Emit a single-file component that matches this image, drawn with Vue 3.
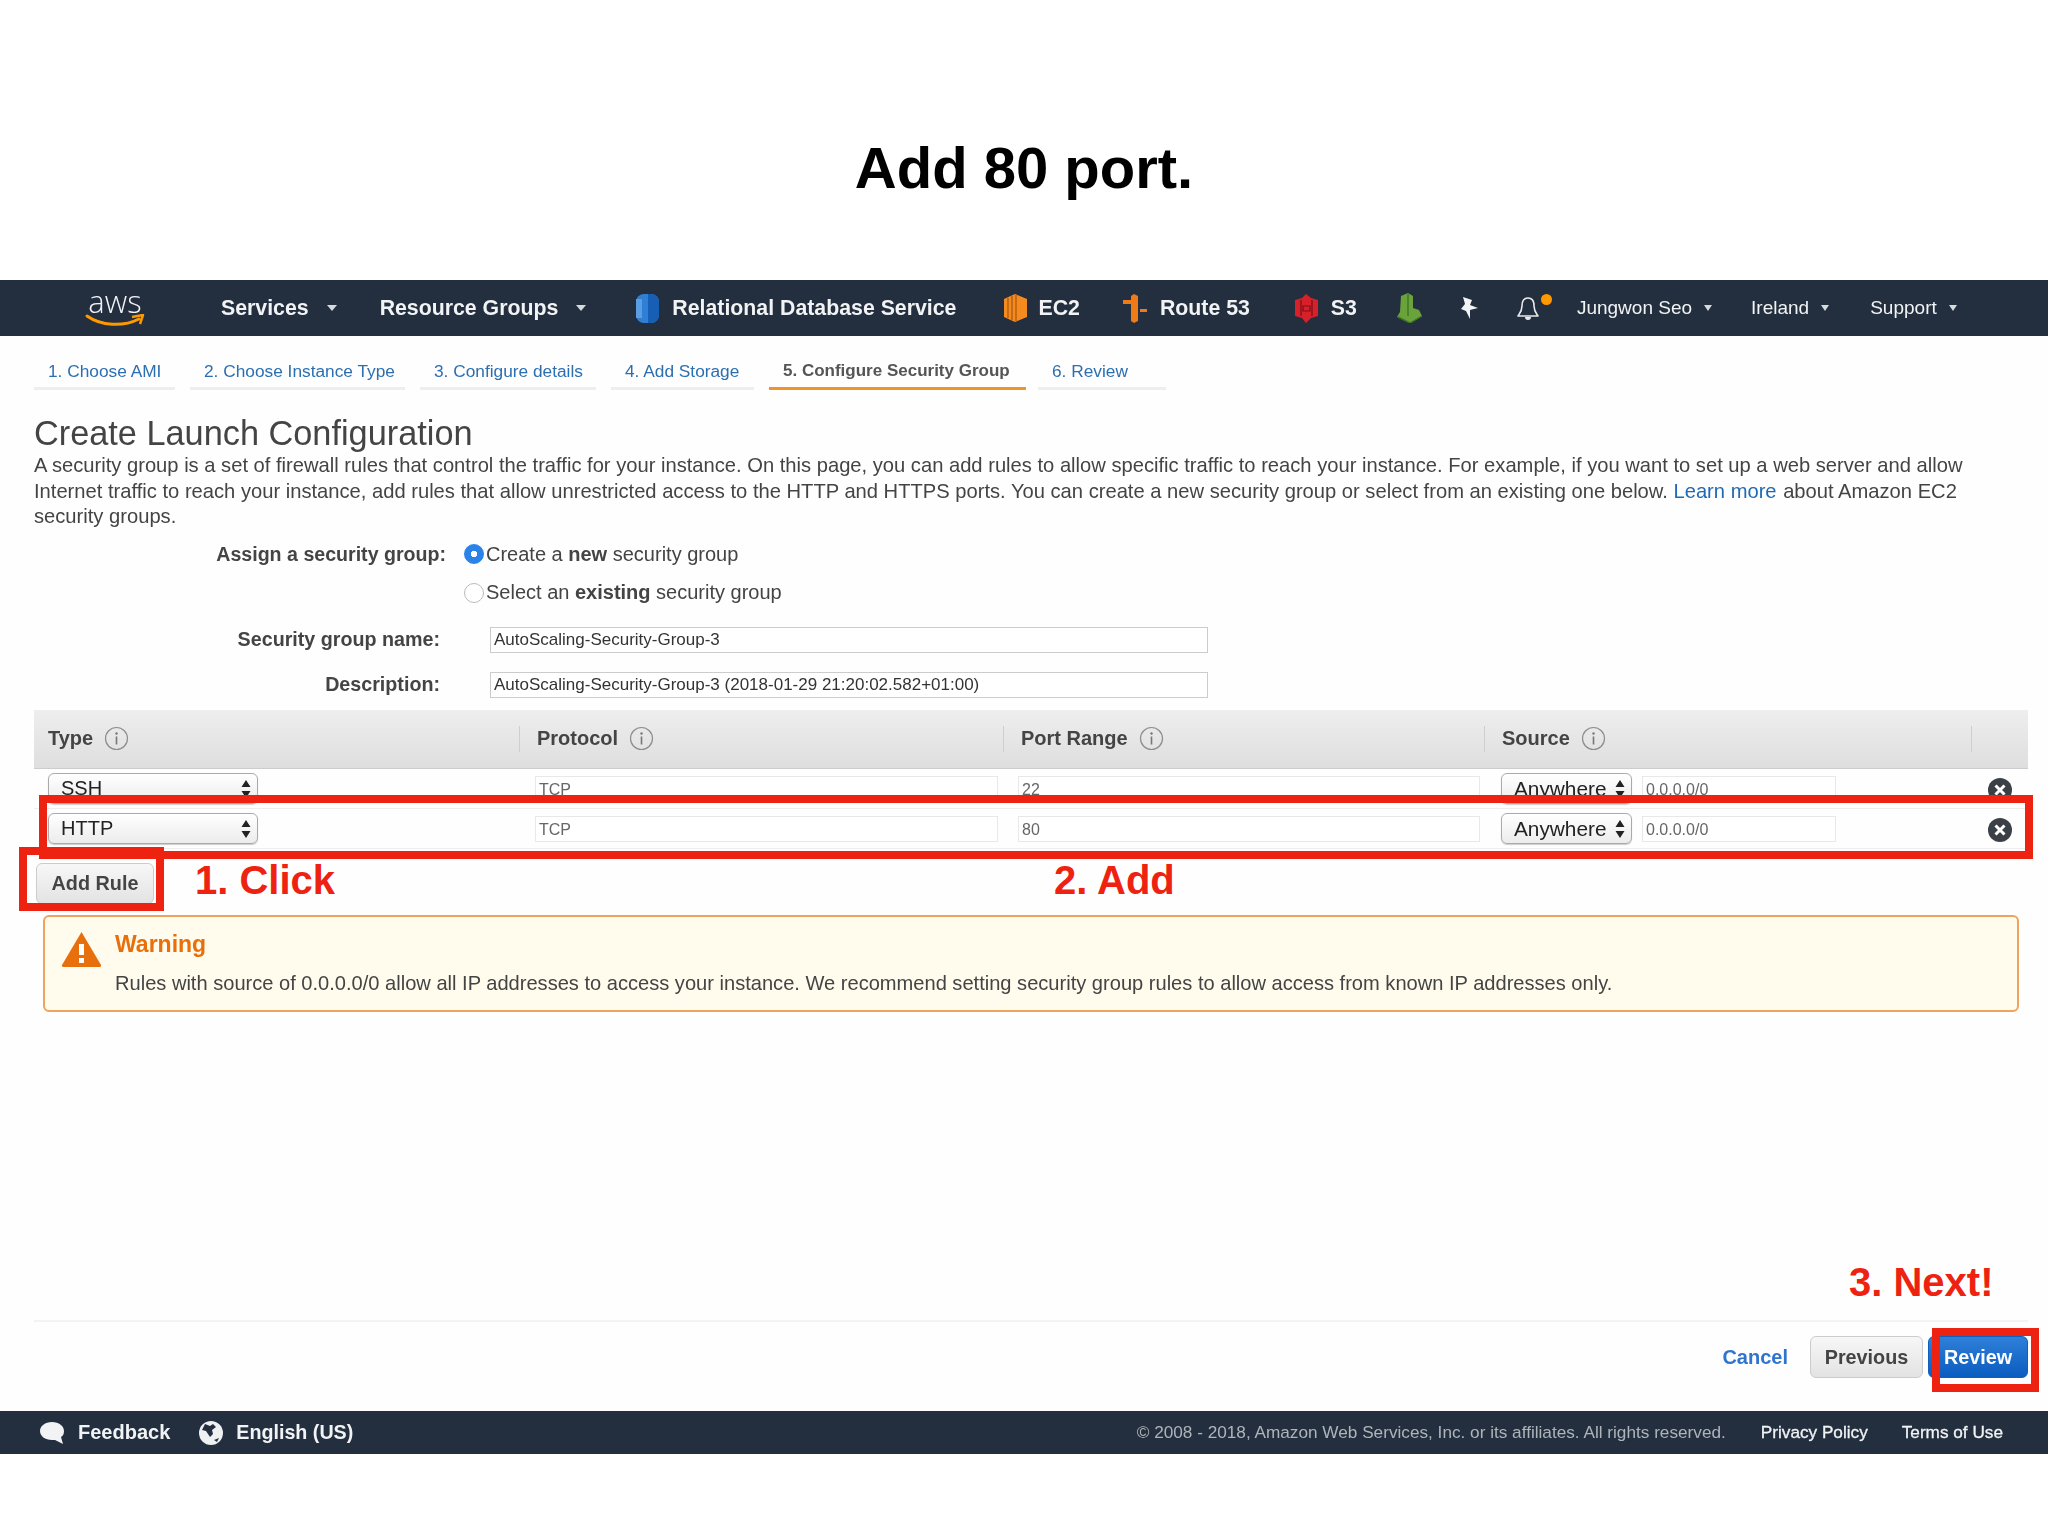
<script setup>
const tabs = [
  { label: '1. Choose AMI', width: 141 },
  { label: '2. Choose Instance Type', width: 215 },
  { label: '3. Configure details', width: 176 },
  { label: '4. Add Storage', width: 143 },
  { label: '5. Configure Security Group', width: 257, active: true },
  { label: '6. Review', width: 128 }
];

const columns = ['Type', 'Protocol', 'Port Range', 'Source'];

const rules = [
  { type: 'SSH', port: '22' },
  { type: 'HTTP', port: '80' }
];
</script>

<template>
  <div class="slide">
    <header class="slide-title">
      <h1>Add 80 port.</h1>
    </header>

    <nav class="topnav">
      <div class="logo">
        <span class="logo-text">aws</span>
        <svg width="60" height="13" viewBox="0 0 60 13">
          <path d="M2 2 C16 12 38 13 54 5" fill="none" stroke="#f90" stroke-width="3" stroke-linecap="round" />
          <path d="M47 3 L58 1 L55 10" fill="none" stroke="#f90" stroke-width="2.5" stroke-linejoin="round" />
        </svg>
      </div>
      <span class="nav-menu nav-services">Services<i class="caret"></i></span>
      <span class="nav-menu nav-groups">Resource Groups<i class="caret"></i></span>

      <span class="nav-link nav-rds">
        <svg width="23" height="29" viewBox="0 0 23 29">
          <rect x="0" y="0" width="23" height="29" rx="8" fill="#2f7fd6" />
          <path d="M12 0 h3 a8 8 0 0 1 8 8 v13 a8 8 0 0 1 -8 8 h-3 z" fill="#175fb4" />
          <rect x="0" y="5" width="6" height="19" fill="#5a9de0" />
        </svg>
        Relational Database Service
      </span>
      <span class="nav-link nav-ec2">
        <svg width="23" height="28" viewBox="0 0 23 28">
          <path d="M0 5 L11 0 L23 5 V23 L11 28 L0 23 Z" fill="#f58a1f" />
          <path d="M4 4 V24 M8 2 V26 M12 1 V27" stroke="#a9570e" stroke-width="1.2" />
        </svg>
        EC2
      </span>
      <span class="nav-link nav-route">
        <svg width="25" height="29" viewBox="0 0 25 29">
          <path d="M12 0 L16 2 V27 L12 29 L9 27 V10 H1 V6 H9 V2 Z" fill="#ee7b17" />
          <rect x="18" y="15" width="7" height="3" fill="#ee7b17" />
        </svg>
        Route 53
      </span>
      <span class="nav-link nav-s3">
        <svg width="23" height="29" viewBox="0 0 23 29">
          <path d="M11 0 L16 4 L23 6 V22 L16 24 L11 29 L7 24 L0 22 V6 L7 4 Z" fill="#d8202a" />
          <path d="M6 6 V22 M17 6 V22 M8 12 H15 V17 H8 Z" stroke="#7a1016" stroke-width="1.2" fill="none" />
        </svg>
        S3
      </span>
      <svg class="nav-green" width="26" height="30" viewBox="0 0 26 30">
        <path d="M5 3 L12 0 L17 3 V15 L23 17 L26 23 L14 30 L1 24 L4 19 Z" fill="#6aa33c" />
        <path d="M12 1 V23 M2 24 L14 30 L26 23" stroke="#3f7524" stroke-width="1.4" fill="none" />
      </svg>
      <svg class="nav-pin" width="18" height="22" viewBox="0 0 18 22">
        <path d="M3 0 L12 3 L10 8 L18 11 L10 13 L10 22 L6 14 L1 12 L5 7 Z" fill="#f2f4f6" />
      </svg>
      <span class="nav-bell">
        <svg width="24" height="25" viewBox="0 0 24 25">
          <path d="M12 2 C7 2 6 6 6 10 C6 15 4 17 2 20 H22 C20 17 18 15 18 10 C18 6 17 2 12 2 Z" fill="none" stroke="#e8eaed" stroke-width="1.6" stroke-linejoin="round" />
          <path d="M9 21 a3 3 0 0 0 6 0 z" fill="#e8eaed" />
        </svg>
        <i class="bell-dot"></i>
      </span>
      <span class="nav-user">Jungwon Seo<i class="caret small"></i></span>
      <span class="nav-user nav-region">Ireland<i class="caret small"></i></span>
      <span class="nav-user nav-support">Support<i class="caret small"></i></span>
    </nav>

    <main class="content">
      <ul class="tabs">
        <li
          v-for="tab in tabs"
          :key="tab.label"
          class="tab"
          :class="{ 'tab--active': tab.active }"
          :style="{ width: tab.width + 'px' }"
        >{{ tab.label }}</li>
      </ul>

      <h2 class="page-heading">Create Launch Configuration</h2>
      <p class="intro">
        A security group is a set of firewall rules that control the traffic for your instance. On this page, you can add rules to allow specific traffic to reach your instance. For example, if you want to set up a web server and allow<br />
        Internet traffic to reach your instance, add rules that allow unrestricted access to the HTTP and HTTPS ports. You can create a new security group or select from an existing one below. <a class="learn">Learn more</a> about Amazon EC2<br />
        security groups.
      </p>

      <div class="assign">
        <div class="assign-row">
          <span class="assign-label">Assign a security group:</span>
          <i class="radio radio--on"></i>
          <span>Create a <b>new</b> security group</span>
        </div>
        <div class="assign-row">
          <span class="assign-label"></span>
          <i class="radio"></i>
          <span>Select an <b>existing</b> security group</span>
        </div>
      </div>

      <div class="fields">
        <label class="field-label">Security group name:</label>
        <div class="text-input wide">AutoScaling-Security-Group-3</div>
        <label class="field-label">Description:</label>
        <div class="text-input wide">AutoScaling-Security-Group-3 (2018-01-29 21:20:02.582+01:00)</div>
      </div>

      <div class="rules">
        <div class="rules-head">
          <div v-for="col in columns" :key="col" class="rules-th">
            {{ col }}
            <svg width="25" height="25" viewBox="0 0 25 25">
              <circle cx="12.5" cy="12.5" r="11" fill="none" stroke="#8d8d8d" stroke-width="1.2" />
              <circle cx="12.5" cy="7.5" r="1.2" fill="#777" />
              <rect x="11.7" y="10.5" width="1.6" height="8" fill="#777" />
            </svg>
          </div>
          <div class="rules-th"></div>
        </div>
        <div v-for="rule in rules" :key="rule.type" class="rule-row">
          <div class="cell">
            <div class="select select--type">
              {{ rule.type }}
              <svg class="updown" width="10" height="18" viewBox="0 0 10 18">
                <path d="M5 0 L9.5 7 H0.5 Z M5 18 L9.5 11 H0.5 Z" fill="#222" />
              </svg>
            </div>
          </div>
          <div class="cell"><div class="text-input faint tcp">TCP</div></div>
          <div class="cell"><div class="text-input faint port">{{ rule.port }}</div></div>
          <div class="cell">
            <div class="select select--source">
              Anywhere
              <svg class="updown" width="10" height="18" viewBox="0 0 10 18">
                <path d="M5 0 L9.5 7 H0.5 Z M5 18 L9.5 11 H0.5 Z" fill="#222" />
              </svg>
            </div>
            <div class="text-input faint cidr">0.0.0.0/0</div>
          </div>
          <div class="cell cell--remove">
            <svg width="24" height="24" viewBox="0 0 24 24">
              <circle cx="12" cy="12" r="12" fill="#3b4046" />
              <path d="M7.5 7.5 L16.5 16.5 M16.5 7.5 L7.5 16.5" stroke="#fff" stroke-width="3" />
            </svg>
          </div>
        </div>
      </div>

      <button class="btn add-rule">Add Rule</button>

      <section class="warning">
        <svg class="warning-icon" width="41" height="37" viewBox="0 0 41 37">
          <path d="M20.5 1 L40 34 Q40.5 36 38 36 H3 Q0.5 36 1 34 Z" fill="#e8700c" />
          <rect x="18" y="13" width="5" height="11" fill="#fff" />
          <rect x="18" y="27" width="5" height="5" fill="#fff" />
        </svg>
        <div>
          <div class="warning-title">Warning</div>
          <div class="warning-text">Rules with source of 0.0.0.0/0 allow all IP addresses to access your instance. We recommend setting security group rules to allow access from known IP addresses only.</div>
        </div>
      </section>

      <div class="actions">
        <a class="cancel">Cancel</a>
        <button class="btn previous">Previous</button>
        <button class="btn review">Review</button>
      </div>
    </main>

    <footer class="foot">
      <svg width="26" height="24" viewBox="0 0 26 24">
        <path d="M13 1 C20 1 25 5 25 10 C25 13 24 15 22 16 L24 23 L16 19 H13 C6 19 1 15 1 10 C1 5 6 1 13 1 Z" fill="#f1f3f5" />
      </svg>
      <span class="foot-strong foot-feedback">Feedback</span>
      <svg class="foot-globe" width="24" height="24" viewBox="0 0 24 24">
        <circle cx="12" cy="12" r="12" fill="#eef0f2" />
        <path d="M6 3 L11 5 L14 3 L17 6 L13 9 L14 13 L11 16 L7 10 L3 9 Z M15 19 L20 17 L18 21 Z" fill="#232f3e" />
      </svg>
      <span class="foot-strong foot-lang">English (US)</span>
      <span class="foot-copy">© 2008 - 2018, Amazon Web Services, Inc. or its affiliates. All rights reserved.</span>
      <a class="foot-link foot-privacy">Privacy Policy</a>
      <a class="foot-link foot-terms">Terms of Use</a>
    </footer>

    <div class="mark mark--row"></div>
    <div class="mark mark--add"></div>
    <div class="mark mark--review"></div>
    <span class="note note--click">1. Click</span>
    <span class="note note--add">2. Add</span>
    <span class="note note--next">3. Next!</span>
  </div>
</template>

<style>
body {
  margin: 0;
  background: #fff;
}
</style>

<style scoped>
.slide {
  position: relative;
  display: flex;
  flex-direction: column;
  width: 2048px;
  height: 1536px;
  padding-bottom: 82px;
  box-sizing: border-box;
  overflow: hidden;
  background: #fff;
  color: #444;
  font-family: "Liberation Sans", Arial, sans-serif;
}

.slide-title {
  display: flex;
  align-items: center;
  justify-content: center;
  height: 224px;
  padding-top: 56px;
}

.slide-title h1 {
  margin: 0;
  color: #000;
  font-size: 58px;
  font-weight: 700;
  line-height: 1;
}

/* the screenshot parts are a little soft in the slide */
.topnav,
.content,
.foot {
  filter: blur(0.45px);
}

/* top bar */
.topnav {
  display: flex;
  flex: none;
  align-items: center;
  height: 56px;
  background: #232f3e;
  color: #f1f3f5;
  font-size: 21px;
  white-space: nowrap;
}

.logo {
  display: flex;
  flex-direction: column;
  align-items: center;
  width: 60px;
  margin-left: 85px;
}

.logo-text {
  height: 26px;
  font-family: "Open Sans", sans-serif;
  font-size: 31px;
  font-weight: 300;
  line-height: 24px;
}

.logo svg {
  margin-top: -1px;
}

.nav-menu,
.nav-link {
  display: flex;
  align-items: center;
  font-weight: 700;
  font-size: 21.3px;
}

.nav-link svg {
  margin-right: 13px;
}

.nav-ec2 svg {
  margin-right: 11px;
}

.caret {
  display: inline-block;
  width: 0;
  height: 0;
  margin-left: 18px;
  border-top: 6px solid #d5dbdb;
  border-left: 5.5px solid transparent;
  border-right: 5.5px solid transparent;
}

.caret.small {
  margin-left: 12px;
  border-width: 6px 4.5px 0;
  border-top-color: #d5dbdb;
  border-left-color: transparent;
  border-right-color: transparent;
}

.nav-services { margin-left: 76px; }
.nav-groups { margin-left: 43px; }
.nav-rds { margin-left: 50px; }
.nav-ec2 { margin-left: 48px; }
.nav-route { margin-left: 42px; }
.nav-s3 { margin-left: 45px; }
.nav-green { margin-left: 39px; }
.nav-pin { margin-left: 38px; }

.nav-bell {
  position: relative;
  display: flex;
  margin-left: 38px;
}

.bell-dot {
  position: absolute;
  top: -2px;
  left: 25px;
  width: 11px;
  height: 11px;
  border-radius: 50%;
  background: #f90;
}

.nav-user {
  display: flex;
  align-items: center;
  margin-left: 37px;
  font-size: 19px;
}

.nav-region { margin-left: 39px; }
.nav-support { margin-left: 41px; }

/* page body */
.content {
  display: flex;
  flex: 1;
  flex-direction: column;
  min-height: 0;
  padding: 0 20px 33px 34px;
  background: #fefefe;
}

.tabs {
  display: flex;
  gap: 15px;
  margin: 20px 0 0;
  padding: 0;
  list-style: none;
}

.tab {
  box-sizing: border-box;
  height: 34px;
  padding-left: 14px;
  border-bottom: 3px solid #eee;
  color: #2c6fb1;
  font-size: 17.3px;
  line-height: 30px;
  white-space: nowrap;
}

.tab--active {
  margin-right: -3px;
  border-bottom-color: #f0932b;
  color: #555;
  font-size: 17px;
  font-weight: 700;
}

.page-heading {
  height: 40px;
  margin: 23px 0 0;
  color: #444;
  font-size: 34.3px;
  font-weight: 400;
  line-height: 40px;
}

.intro {
  margin: 0;
  color: #444;
  font-size: 20.16px;
  line-height: 25.6px;
  white-space: nowrap;
}

.learn {
  margin-right: 1px;
  color: #1f69b5;
}

.assign {
  margin-top: 5px;
  font-size: 20px;
}

.assign-row {
  display: flex;
  align-items: center;
  height: 38.5px;
}

.assign-label {
  width: 412px;
  margin-right: 18px;
  color: #444;
  font-size: 19.6px;
  font-weight: 700;
  text-align: right;
}

.radio {
  flex: none;
  width: 18px;
  height: 18px;
  margin-right: 2px;
  border: 1px solid #bbb;
  border-radius: 50%;
  background: #fff;
}

.radio--on {
  border-color: #2b83ea;
  background: radial-gradient(circle, #fff 0 3px, #2b83ea 3.5px);
}

.fields {
  display: grid;
  grid-template-columns: 406px 718px;
  column-gap: 50px;
  row-gap: 19px;
  align-items: center;
  margin-top: 15px;
}

.field-label {
  color: #444;
  font-size: 19.7px;
  font-weight: 700;
  text-align: right;
}

.text-input {
  display: flex;
  align-items: center;
  box-sizing: border-box;
  height: 26px;
  padding-left: 3px;
  border: 1px solid #ccc;
  background: #fff;
  color: #333;
  font-size: 17px;
}

.text-input.faint {
  border-color: #e8e8e8;
  color: #666;
  font-size: 16px;
  padding-top: 2px;
}

.rules {
  margin-top: 12px;
}

.rules-head {
  display: grid;
  grid-template-columns: 486px 484px 481px 487px 56px;
  align-items: center;
  box-sizing: border-box;
  height: 59px;
  border-bottom: 1px solid #ccc;
  background: linear-gradient(#eee, #dedede);
}

.rules-th {
  display: flex;
  align-items: center;
  gap: 11px;
  box-sizing: border-box;
  height: 26px;
  padding-left: 17px;
  border-right: 1px solid #cfcfcf;
  color: #444;
  font-size: 20px;
  font-weight: 700;
}

.rules-th:first-child {
  padding-left: 14px;
}

.rules-th:last-child {
  border-right: 0;
}

.rule-row {
  display: grid;
  grid-template-columns: 486px 484px 481px 487px 56px;
  box-sizing: border-box;
  height: 40px;
  padding-top: 4px;
  border-bottom: 1px solid #eee;
  overflow: hidden;
}

.cell {
  display: flex;
  gap: 10px;
  align-items: flex-start;
  padding-left: 15px;
}

.cell:first-child {
  padding-left: 14px;
}

.cell--remove {
  padding: 5px 0 0 16px;
}

.select {
  position: relative;
  box-sizing: border-box;
  height: 31px;
  padding-left: 12px;
  border: 1px solid #aaa;
  border-radius: 6px;
  background: linear-gradient(#fff, #ececec);
  box-shadow: 0 1px 1px #ccc;
  color: #222;
  font-size: 20px;
  line-height: 29px;
}

.select--type { width: 210px; }
.select--source { width: 131px; margin-left: 1px; font-size: 20.8px; }

.updown {
  position: absolute;
  top: 6px;
  right: 6px;
}

.tcp { width: 463px; margin-top: 3px; }
.port { width: 462px; margin-top: 3px; margin-left: -1px; }
.cidr { width: 194px; margin-top: 3px; }

.btn {
  box-sizing: border-box;
  border: 1px solid #ccc;
  border-radius: 6px;
  background: linear-gradient(#f7f7f7, #e3e3e3);
  color: #444;
  font-family: inherit;
  font-size: 19.8px;
  font-weight: 700;
}

.add-rule {
  align-self: flex-start;
  width: 118px;
  height: 41px;
  margin: 14px 0 0 2px;
  padding: 0;
}

.warning {
  display: flex;
  gap: 13px;
  box-sizing: border-box;
  height: 97px;
  margin: 11px 9px 0 9px;
  padding: 12px 0 0 16px;
  border: 2px solid #f0a35c;
  border-radius: 6px;
  background: #fffbed;
}

.warning-icon {
  flex: none;
  margin-top: 2px;
}

.warning-title {
  color: #e8700c;
  font-size: 23px;
  font-weight: 700;
  line-height: 30px;
}

.warning-text {
  margin-top: 12px;
  color: #444;
  font-size: 20.08px;
  line-height: 24px;
  white-space: nowrap;
}

.actions {
  display: flex;
  align-items: center;
  justify-content: flex-end;
  margin-top: auto;
  padding-top: 14px;
  border-top: 2px solid #f3f3f3;
}

.cancel {
  margin-right: 22px;
  color: #2f74cf;
  font-size: 20px;
  font-weight: 700;
}

.previous {
  width: 113px;
  height: 42px;
  margin-right: 5px;
  padding: 0;
}

.review {
  width: 100px;
  height: 42px;
  padding: 0;
  border-color: #0f5fbd;
  background: linear-gradient(#2f80d8, #0a5cc0);
  color: #fff;
}

/* footer bar */
.foot {
  display: flex;
  flex: none;
  align-items: center;
  height: 43px;
  padding-left: 39px;
  background: #232f3e;
  color: #f1f3f5;
  font-size: 20px;
  white-space: nowrap;
}

.foot-strong {
  margin-left: 13px;
  font-weight: 700;
}

.foot-feedback {
  margin-right: 29px;
}

.foot-lang {
  font-size: 19.7px;
}

.foot-copy {
  margin-left: auto;
  color: #aeb4bb;
  font-size: 17.2px;
}

.foot-link {
  font-size: 17.2px;
  -webkit-text-stroke: 0.3px #f1f3f5;
}

.foot-privacy { margin-left: 35px; }
.foot-terms { margin: 0 45px 0 34px; }

/* slide annotations on top of the screenshot */
.mark {
  position: absolute;
  box-sizing: border-box;
  border: 8px solid #ee2211;
}

.mark--row {
  top: 795px;
  left: 39px;
  width: 1994px;
  height: 64px;
}

.mark--add {
  top: 847px;
  left: 19px;
  width: 145px;
  height: 64px;
}

.mark--review {
  top: 1328px;
  left: 1932px;
  width: 107px;
  height: 64px;
}

.note {
  position: absolute;
  color: #ee2211;
  font-size: 40px;
  font-weight: 700;
  line-height: 46px;
  white-space: nowrap;
}

.note--click { top: 857px; left: 195px; }
.note--add { top: 857px; left: 1054px; }
.note--next { top: 1259px; left: 1849px; }
</style>
